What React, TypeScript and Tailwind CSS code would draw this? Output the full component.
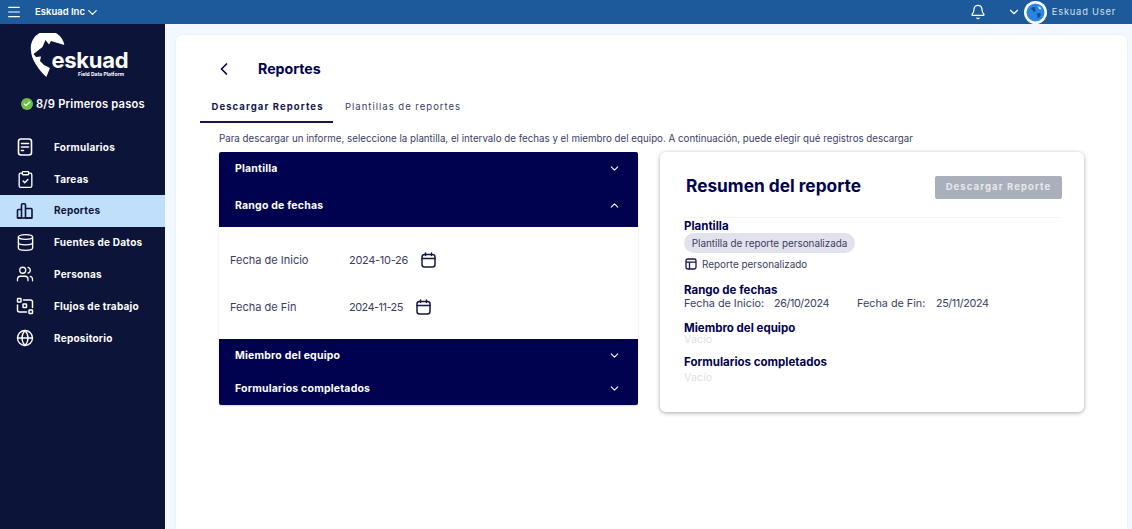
import React from 'react';
import { Menu, ChevronDown, ChevronUp, ChevronLeft, Bell, ClipboardCheck, Database, Users, Globe, Check } from 'lucide-react';

const NAV = [
  { label: 'Formularios', icon: 'form' },
  { label: 'Tareas', icon: 'tasks' },
  { label: 'Reportes', icon: 'reports', active: true },
  { label: 'Fuentes de Datos', icon: 'data' },
  { label: 'Personas', icon: 'people' },
  { label: 'Flujos de trabajo', icon: 'flow' },
  { label: 'Repositorio', icon: 'globe' },
];

const FormIcon = () => (
  <svg width="18" height="18" viewBox="0 0 18 18" fill="none" stroke="currentColor" strokeWidth="1.6" strokeLinecap="round">
    <rect x="2.500" y="1" width="13" height="16" rx="2.500" />
    <path d="M5.500 5.500h7M5.500 9h7M5.500 12.500h2" />
  </svg>
);

const ReportsIcon = () => (
  <svg width="18" height="18" viewBox="0 0 18 18" fill="none" stroke="currentColor" strokeWidth="1.6" strokeLinejoin="round">
    <path d="M1.500 16V8.500a1 1 0 0 1 1-1h3V16zM5.500 16V3a1.200 1.200 0 0 1 1.200-1.200h1.600A1.200 1.200 0 0 1 9.500 3v13M9.500 16V6.500h5.500a1 1 0 0 1 1 1V16z" />
    <path d="M1.500 16h14.500" />
  </svg>
);

const FlowIcon = () => (
  <svg width="18" height="18" viewBox="0 0 18 18" fill="none" stroke="currentColor" strokeWidth="1.5" strokeLinecap="round" strokeLinejoin="round">
    <rect x="1.500" y="1.500" width="3.500" height="3.500" rx="0.600" />
    <rect x="7" y="7" width="3.500" height="3.500" rx="0.600" />
    <rect x="13" y="13" width="3.500" height="3.500" rx="0.600" />
    <path d="M7.500 3h7a2 2 0 0 1 2 2v5.500M10.500 15H3.500a2 2 0 0 1-2-2V8" />
  </svg>
);

const NavIcon = ({ name }: { name: string }) => {
  if (name === 'form') return <FormIcon />;
  if (name === 'tasks') return <ClipboardCheck size={19} strokeWidth={1.700} />;
  if (name === 'reports') return <ReportsIcon />;
  if (name === 'data') return <Database size={19} strokeWidth={1.700} />;
  if (name === 'people') return <Users size={18} strokeWidth={1.700} />;
  if (name === 'flow') return <FlowIcon />;
  return <Globe size={18} strokeWidth={1.800} />;
};

const CalendarIcon = () => (
  <svg width="15" height="16" viewBox="0 0 15 16" fill="none" stroke="#14174a" strokeWidth="1.500" strokeLinecap="round">
    <rect x="1" y="2.500" width="13" height="12.500" rx="2.500" />
    <path d="M1 6.500h13M4.500 1v2.500M10.500 1v2.500" />
  </svg>
);

const TableIcon = () => (
  <svg width="12" height="12" viewBox="0 0 12 12" fill="none" stroke="#14174a" strokeWidth="1.300">
    <rect x="1" y="1" width="10" height="10" rx="1.800" />
    <path d="M1 4.200h10M4.500 4.200V11" />
  </svg>
);

const EarthAvatar = () => (
  <svg width="23" height="23" viewBox="0 0 23 23" className="ml-[3px]">
    <circle cx="11.500" cy="11.500" r="11.500" fill="#ffffff" />
    <circle cx="11.500" cy="11.500" r="9" fill="#2a84e0" />
    <path d="M6.500 8l2.500-2 2.500.5-1 1.500 1.500 1-1.200 2-1.600-.5-.5-1.500zM12.500 12.500l3-.5 1.500 1.200-1.700 3.300-1.600.4-.4-2.400z" fill="#0f4f96" />
    <path d="M14 5l2.500 1.500.8 2-2.300-.6z" fill="#d8ebfb" />
  </svg>
);

const Logo = () => (
  <div className="relative h-[48px] w-[100px]">
    <svg width="36" height="46" viewBox="0 0 36 46" className="absolute left-0 top-0">
      <path d="M1 17.500A16.500 16.500 0 0 1 34.300 12L21 8l-2 3.500L15.500 7l-3 7-9 7 2.500 3 5-.5-1 4.500 4 4 6 3-3.700 9C10 38 1 27 1 17.500z" fill="#ffffff" />
    </svg>
    <span className="absolute left-[21.500px] top-[13px] text-[22px] leading-[28px] font-bold tracking-[-0.3px] text-white">eskuad</span>
    <span className="absolute left-[48px] top-[38px] text-[5px] leading-[6px] font-bold whitespace-nowrap text-white">Field Data Platform</span>
  </div>
);

const Sidebar = () => (
  <aside className="flex w-[165px] shrink-0 flex-col bg-[#0c1439] text-white">
    <div className="pt-[9px] pl-[30px]">
      <Logo />
    </div>
    <div className="mt-[15px] flex items-center pl-[21px] text-[11.200px] leading-[16px] font-semibold tracking-[0.2px]">
      <span className="mr-[3px] flex h-[12px] w-[12px] items-center justify-center rounded-full bg-[#6cc04a]">
        <Check size={8} strokeWidth={3.500} color="#ffffff" />
      </span>
      8/9 Primeros pasos
    </div>
    <nav className="mt-[19.400px] flex flex-col">
      {NAV.map((item) => (
        <div
          key={item.label}
          className={`flex h-[31.800px] items-center pl-[16px] text-[10px] font-bold tracking-[0.25px] ${item.active ? 'bg-[#bfdffb] text-[#0c1439]' : 'text-white'}`}
        >
          <span className="flex w-[38px] shrink-0">
            <NavIcon name={item.icon} />
          </span>
          {item.label}
        </div>
      ))}
    </nav>
  </aside>
);

const AccHeader = ({ label, open, className }: { label: string; open?: boolean; className: string }) => (
  <div className={`flex items-center justify-between pr-[17px] text-[10.500px] font-bold tracking-[0.2px] text-white ${className}`}>
    {label}
    {open ? <ChevronUp size={13} strokeWidth={2} /> : <ChevronDown size={13} strokeWidth={2} />}
  </div>
);

const DateRow = ({ label, value, className, valueClass }: { label: string; value: string; className: string; valueClass: string }) => (
  <div className={`flex items-center text-[#3b3d63] ${className}`}>
    <span className="w-[119px] shrink-0">{label}</span>
    <span className={valueClass}>{value}</span>
    <CalendarIcon />
  </div>
);

const Accordion = () => (
  <div className="flex h-[253px] w-[419px] shrink-0 flex-col overflow-hidden rounded-[2px] bg-white text-[11px] shadow-[0_1px_2px_rgba(0,0,0,0.15)]">
    <div className="h-[75px] bg-[#00024f] pl-[16px]">
      <AccHeader label="Plantilla" className="h-[33px]" />
      <AccHeader label="Rango de fechas" open className="mt-[4px] h-[33px]" />
    </div>
    <div className="flex h-[112px] flex-col pl-[11px]">
      <DateRow label="Fecha de Inicio" value="2024-10-26" valueClass="mr-[13px] tracking-[-0.3px]" className="mt-[25px] h-[16px]" />
      <DateRow label="Fecha de Fin" value="2024-11-25" valueClass="mr-[13px] tracking-[-0.55px]" className="mt-[31px] h-[16px]" />
    </div>
    <div className="flex-1 bg-[#00024f] pl-[16px]">
      <AccHeader label="Miembro del equipo" className="h-[33px]" />
      <AccHeader label="Formularios completados" className="h-[33px]" />
    </div>
  </div>
);

const Summary = () => (
  <section className="ml-[22px] h-[260px] w-[424px] shrink-0 rounded-[6px] bg-white px-[24px] shadow-[0_1px_4px_rgba(0,0,0,0.35)]">
    <div className="flex h-[66px] items-center justify-between border-b border-[#f3f4f6] pt-[2px]">
      <h2 className="ml-[2px] text-[17.300px] font-bold text-[#00024f]">Resumen del reporte</h2>
      <button className="mt-[3px] mr-[-2px] h-[23px] w-[127px] rounded-[2px] bg-[#a9b0bb] text-[9.500px] font-bold tracking-[1.100px] text-[#e6e8ec]">
        Descargar Reporte
      </button>
    </div>
    <div className="mt-[1px] text-[10.800px] leading-[14px] text-[#3b3d63]">
      <h3 className="text-[11.500px] leading-[14px] font-bold text-[#00024f]">Plantilla</h3>
      <span className="block h-[20px] w-[171px] rounded-full bg-[#e2e2ec] text-center text-[9.900px] leading-[20px]">
        Plantilla de reporte personalizada
      </span>
      <div className="mt-[4px] flex h-[14px] items-center text-[9.900px]">
        <span className="mr-[5px] ml-[1px]"><TableIcon /></span>
        Reporte personalizado
      </div>
      <h3 className="mt-[12px] text-[11.500px] leading-[14px] font-bold text-[#00024f]">Rango de fechas</h3>
      <div className="flex h-[14px] items-center">
        <span className="w-[90px]">Fecha de Inicio:</span>
        <span className="w-[83px] tracking-[-0.4px]">26/10/2024</span>
        <span className="w-[79px]">Fecha de Fin:</span>
        <span className="tracking-[-0.4px]">25/11/2024</span>
      </div>
      <h3 className="mt-[10px] text-[11.500px] leading-[14px] font-bold text-[#00024f]">Miembro del equipo</h3>
      <p className="mt-[-2px] text-[#dfe1e6]">Vacío</p>
      <h3 className="mt-[8px] text-[11.500px] leading-[14px] font-bold text-[#00024f]">Formularios completados</h3>
      <p className="mt-[2px] text-[#dfe1e6]">Vacío</p>
    </div>
  </section>
);

export default function App() {
  return (
    <div className="flex h-[529px] w-[1132px] flex-col overflow-hidden bg-[#f3f8fe] font-['Inter',sans-serif]">
      <header className="flex h-[24px] shrink-0 items-center bg-[#1c5a9c] text-white">
        <Menu size={16} strokeWidth={1.800} className="ml-[6px]" />
        <span className="ml-[13px] text-[9.500px] font-semibold">Eskuad Inc</span>
        <ChevronDown size={15} strokeWidth={2} />
        <Bell size={16} strokeWidth={1.900} className="ml-auto" />
        <ChevronDown size={14} strokeWidth={2} className="ml-[21px]" />
        <EarthAvatar />
        <span className="mr-[16px] ml-[5px] text-[9.300px] tracking-[0.8px] text-[#d3e0ee]">Eskuad User</span>
      </header>
      <div className="flex min-h-0 flex-1">
        <Sidebar />
        <main className="mt-[11px] mr-[5px] ml-[11px] flex-1 rounded-t-[6px] bg-white pl-[24px] shadow-[0_0_2px_rgba(30,90,160,0.12)]">
          <div className="flex h-[68px] items-center pl-[14px] text-[#00024f]">
            <ChevronLeft size={20} strokeWidth={2} />
            <h1 className="ml-[24px] text-[14.200px] font-bold">Reportes</h1>
          </div>
          <div className="flex h-[20px] items-start">
            <div className="flex h-[20px] w-[133px] justify-center border-b-2 border-[#14174a] pl-[2px] text-[9.500px] leading-[7px] font-bold tracking-[1.100px] text-[#14174a]">
              Descargar Reportes
            </div>
            <span className="ml-[12px] text-[9.500px] leading-[7px] tracking-[1px] text-[#3b3d63]">Plantillas de reportes</span>
          </div>
          <div className="pl-[19px]">
            <p className="mt-[8px] h-[21px] text-[9.750px] leading-[16px] text-[#3b3d63]">
              Para descargar un informe, seleccione la plantilla, el intervalo de fechas y el miembro del equipo. A continuación, puede elegir qué registros descargar
            </p>
            <div className="flex items-start">
              <Accordion />
              <Summary />
            </div>
          </div>
        </main>
      </div>
    </div>
  );
}
